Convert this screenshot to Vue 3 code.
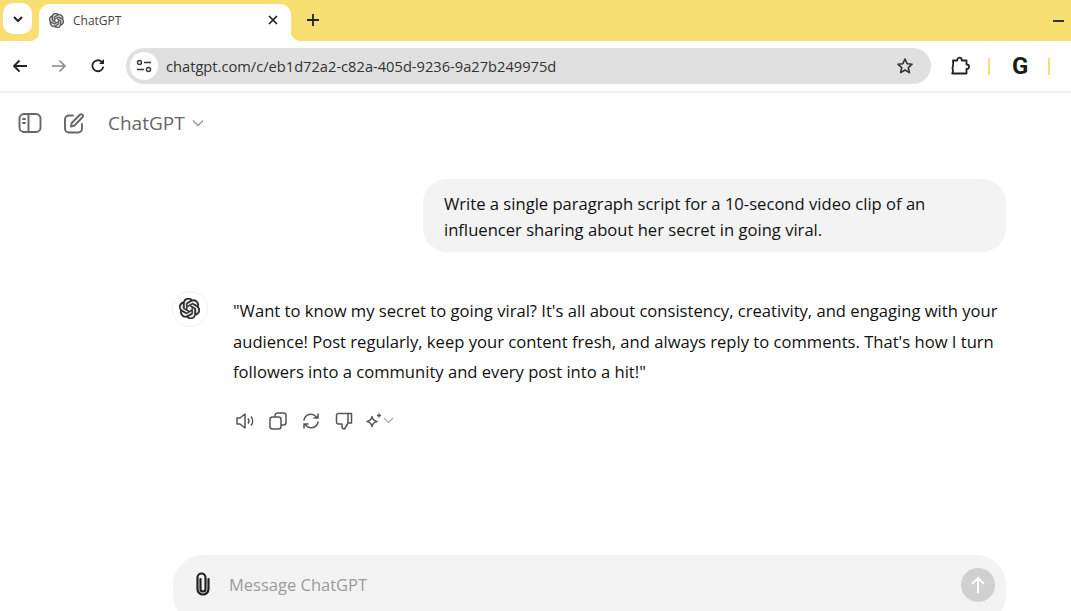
<template>
  <div class="page">
    <!-- tab strip -->
    <div class="tabstrip">
      <button class="tab-search">
        <svg width="12" height="12" viewBox="0 0 12 12"><path d="M2 4l4 4 4-4" fill="none" stroke="#222" stroke-width="2" /></svg>
      </button>
      <div class="tab">
        <svg class="favicon" width="15" height="15" viewBox="0 0 24 24"><path :d="logo" fill="#555" stroke="#555" stroke-width="1" /></svg>
        <span class="tab-title">ChatGPT</span>
        <svg class="tab-close" width="10" height="10" viewBox="0 0 10 10"><path d="M1 1l8 8M9 1l-8 8" stroke="#222" stroke-width="1.7" /></svg>
      </div>
      <svg class="new-tab" width="12" height="12" viewBox="0 0 12 12"><path d="M6 0v12M0 6h12" stroke="#222" stroke-width="1.8" /></svg>
      <span class="minimize"></span>
    </div>

    <!-- toolbar -->
    <div class="toolbar">
      <svg class="nav" width="16" height="14" viewBox="0 0 16 14"><path d="M15 7H2M7.500 1.500L2 7l5.500 5.500" fill="none" stroke="#222" stroke-width="1.8" /></svg>
      <svg class="nav" width="16" height="14" viewBox="0 0 16 14"><path d="M1 7h13M8.500 1.500L14 7l-5.500 5.500" fill="none" stroke="#888" stroke-width="1.5" /></svg>
      <svg class="nav" width="16" height="16" viewBox="0 0 16 16"><path d="M13.300 8.600A5.500 5.500 0 1 1 11.700 3.800L13.500 5.500" fill="none" stroke="#222" stroke-width="1.8" /><path d="M14 1v5H9z" fill="#222" /></svg>
      <div class="omnibox">
        <span class="site-info">
          <svg width="16" height="14" viewBox="0 0 16 14" fill="none" stroke="#333" stroke-width="1.4"><circle cx="3.500" cy="3.500" r="2" /><path d="M8 3.500h7M1 10.500h7" /><circle cx="12.500" cy="10.500" r="2" /></svg>
        </span>
        <span class="url">chatgpt.com/c/eb1d72a2-c82a-405d-9236-9a27b249975d</span>
        <svg class="star" width="18" height="18" viewBox="0 0 18 18"><path d="M9 2l2.100 4.700 5 .5-3.800 3.400 1.100 5L9 13l-4.400 2.600 1.100-5L1.900 7.200l5-.5z" fill="none" stroke="#333" stroke-width="1.600" stroke-linejoin="round" /></svg>
      </div>
      <svg class="puzzle" width="20" height="20" viewBox="0 0 20 20"><path d="M3 4.500h4.300v-.6a2.200 2.200 0 0 1 4.400 0v.6H16.500v4h.3a2.200 2.200 0 0 1 0 4.400h-.3v4.600H2.200c.9-1.500 1.200-3.200 .3-5.200.8-2.600 1-5 .5-7.800z" fill="none" stroke="#222" stroke-width="1.800" stroke-linejoin="round" /></svg>
      <span class="sep sep-a"></span>
      <span class="g-mark">G</span>
      <span class="sep sep-b"></span>
    </div>

    <!-- chatgpt page -->
    <div class="app-header">
      <svg class="head-icon" width="24" height="22" viewBox="0 0 24 22" fill="none" stroke="#666" stroke-width="1.900"><rect x="1.500" y="2" width="21" height="18" rx="4.500" /><path d="M10.500 2v18" /><path d="M5 7h2M5 11h2" stroke-linecap="round" /></svg>
      <svg class="head-icon edit" width="22" height="22" viewBox="0 0 22 22" fill="none" stroke="#666" stroke-width="1.900" stroke-linecap="round" stroke-linejoin="round"><path d="M10 3.500H6a4 4 0 0 0-4 4v9a4 4 0 0 0 4 4h9a4 4 0 0 0 4-4V12" /><path d="M8 14.500l.7-3.500 8.500-8.500a1.800 1.800 0 0 1 2.500 2.500L11.500 13.500z" /></svg>
      <span class="model">ChatGPT</span>
      <svg width="12" height="8" viewBox="0 0 12 8"><path d="M1 1.500l5 5 5-5" fill="none" stroke="#999" stroke-width="1.400" /></svg>
    </div>

    <main class="chat">
      <div class="user-row">
        <div class="bubble">Write a single paragraph script for a 10-second video clip of an influencer sharing about her secret in going viral.</div>
      </div>

      <div class="answer">
        <div class="avatar">
          <svg width="21" height="21" viewBox="0 0 24 24"><path :d="logo" fill="#222" stroke="#222" stroke-width=".6" /></svg>
        </div>
        <div class="answer-body">
          <p class="answer-text">"Want to know my secret to going viral? It's all about consistency, creativity, and engaging with your audience! Post regularly, keep your content fresh, and always reply to comments. That's how I turn followers into a community and every post into a hit!"</p>
          <div class="actions">
            <svg width="22" height="20" viewBox="0 0 22 20"><path d="M4 7h3l5-4v14l-5-4H4z" fill="none" stroke="#555" stroke-width="1.500" stroke-linejoin="round" /><path d="M15 7.500a4 4 0 0 1 0 5M18 5.500a7 7 0 0 1 0 9" fill="none" stroke="#555" stroke-width="1.500" /></svg>
            <svg width="20" height="20" viewBox="0 0 20 20" fill="none" stroke="#555" stroke-width="1.500"><rect x="2" y="6" width="11" height="12" rx="2.500" /><path d="M7 6V4.500A2.500 2.500 0 0 1 9.500 2h6A2.500 2.500 0 0 1 18 4.500v7a2.500 2.500 0 0 1-2.500 2.500H13" /></svg>
            <svg width="20" height="20" viewBox="0 0 20 20" fill="none" stroke="#555" stroke-width="1.500" stroke-linecap="round"><path d="M3 9a7 7 0 0 1 12-3.500L17 7M17 3v4h-4M17 11a7 7 0 0 1-12 3.500L3 13M3 17v-4h4" /></svg>
            <svg width="20" height="20" viewBox="0 0 20 20" fill="none" stroke="#555" stroke-width="1.500" stroke-linejoin="round"><path d="M2.500 4.500A2 2 0 0 1 4.500 2.500H17.500V12H14L10.500 18c-1.500 0-2.500-1-2.500-2.500V13H4.500a2 2 0 0 1-2-2z" /><path d="M14 3v9" /></svg>
            <span class="spark">
              <svg width="18" height="18" viewBox="0 0 18 18" fill="none" stroke="#555" stroke-width="1.400" stroke-linejoin="round"><path d="M7 4.500c.6 3 1.700 4.300 5 5-3.300.7-4.400 2-5 5-.6-3-1.700-4.300-5-5 3.300-.7 4.400-2 5-5z" /><path d="M14 1.500v4M12 3.500h4" /></svg>
              <svg width="11" height="7" viewBox="0 0 11 7"><path d="M1 1l4.500 4.500L10 1" fill="none" stroke="#aaa" stroke-width="1.200" /></svg>
            </span>
          </div>
        </div>
      </div>

      <div class="composer">
        <svg class="clip" width="20" height="24" viewBox="0 0 20 24"><path d="M7.500 7v10a2.500 2.500 0 0 0 5 0V5.500a4 4 0 0 0-8 0V17a5.500 5.500 0 0 0 11 0V7" fill="none" stroke="#222" stroke-width="2.200" stroke-linecap="round" /></svg>
        <span class="placeholder">Message ChatGPT</span>
        <button class="send">
          <svg width="16" height="18" viewBox="0 0 16 18"><path d="M8 17V2M2 8l6-6 6 6" fill="none" stroke="#fff" stroke-width="2" /></svg>
        </button>
      </div>
    </main>
  </div>
</template>

<script setup>
const logo = "M22.2819 9.8211a5.9847 5.9847 0 0 0-.5157-4.9108 6.0462 6.0462 0 0 0-6.5098-2.9A6.0651 6.0651 0 0 0 4.9807 4.1818a5.9847 5.9847 0 0 0-3.9977 2.9 6.0462 6.0462 0 0 0 .7427 7.0966 5.98 5.98 0 0 0 .511 4.9107 6.051 6.051 0 0 0 6.5146 2.9001A5.9847 5.9847 0 0 0 13.2599 24a6.0557 6.0557 0 0 0 5.7718-4.2058 5.9894 5.9894 0 0 0 3.9977-2.9001 6.0557 6.0557 0 0 0-.7475-7.0729zm-9.022 12.6081a4.4755 4.4755 0 0 1-2.8764-1.0408l.1419-.0804 4.7783-2.7582a.7948.7948 0 0 0 .3927-.6813v-6.7369l2.02 1.1686a.071.071 0 0 1 .038.052v5.5826a4.504 4.504 0 0 1-4.4945 4.4944zm-9.6607-4.1254a4.4708 4.4708 0 0 1-.5346-3.0137l.142.0852 4.783 2.7582a.7712.7712 0 0 0 .7806 0l5.8428-3.3685v2.3324a.0804.0804 0 0 1-.0332.0615L9.74 19.9502a4.4992 4.4992 0 0 1-6.1408-1.6464zM2.3408 7.8956a4.485 4.485 0 0 1 2.3655-1.9728V11.6a.7664.7664 0 0 0 .3879.6765l5.8144 3.3543-2.0201 1.1685a.0757.0757 0 0 1-.071 0l-4.8303-2.7865A4.504 4.504 0 0 1 2.3408 7.872zm16.5963 3.8558L13.1038 8.364 15.1192 7.2a.0757.0757 0 0 1 .071 0l4.8303 2.7913a4.4944 4.4944 0 0 1-.6765 8.1042v-5.6772a.79.79 0 0 0-.407-.667zm2.0107-3.0231l-.142-.0852-4.7735-2.7818a.7759.7759 0 0 0-.7854 0L9.409 9.2297V6.8974a.0662.0662 0 0 1 .0284-.0615l4.8303-2.7866a4.4992 4.4992 0 0 1 6.6802 4.66zM8.3065 12.863l-2.02-1.1638a.0804.0804 0 0 1-.038-.0567V6.0742a4.4992 4.4992 0 0 1 7.3757-3.4537l-.142.0805L8.704 5.459a.7948.7948 0 0 0-.3927.6813zm1.0976-2.3654l2.602-1.4998 2.6069 1.4998v2.9994l-2.5974 1.4997-2.6067-1.4997Z";
</script>

<style>
html, body { margin: 0; background: #fff; overflow: hidden; }
</style>

<style scoped>
.page {
  width: 1071px;
  height: 611px;
  overflow: hidden;
  display: flex;
  flex-direction: column;
  font-family: "Open Sans", "Noto Sans", sans-serif;
  color: #111;
  background: #fff;
}

/* 分頁列 */
.tabstrip {
  height: 41px;
  flex: none;
  display: flex;
  align-items: flex-end;
  background: #f8df72;
  padding: 0 7px 0 3px;
}
.tab-search {
  width: 29px;
  height: 31px;
  align-self: flex-start;
  margin-top: 3px;
  border: none;
  padding: 0;
  border-radius: 10px;
  background: #fff;
  display: flex;
  align-items: center;
  justify-content: center;
}
.tab {
  position: relative;
  width: 252px;
  height: 37px;
  margin-left: 7px;
  box-sizing: border-box;
  padding: 0 13px 5px 10px;
  background: #fff;
  border-radius: 11px 11px 0 0;
  display: flex;
  align-items: center;
}
.tab::before, .tab::after {
  content: "";
  position: absolute;
  bottom: 0;
  width: 10px;
  height: 10px;
}
.tab::before { left: -10px; background: radial-gradient(circle at 0 0, transparent 10px, #fff 10.5px); }
.tab::after { right: -10px; background: radial-gradient(circle at 100% 0, transparent 10px, #fff 10.5px); }
.tab-title {
  margin-left: 9px;
  font-size: 12px;
  color: #444;
  flex: 1;
}
.new-tab { align-self: center; margin-left: 16px; margin-bottom: 1px; }
.minimize {
  align-self: center;
  margin-left: auto;
  width: 11px;
  height: 2px;
  background: #333;
}

/* 工具列 */
.toolbar {
  height: 50px;
  flex: none;
  display: flex;
  align-items: center;
  box-sizing: border-box;
  padding-left: 12px;
  background: #fff;
}
.nav { margin-right: 23px; }
.nav:nth-child(3) { margin-right: 20px; }
.omnibox {
  width: 805px;
  height: 36px;
  box-sizing: border-box;
  padding: 0 17px 0 4px;
  border-radius: 18px;
  background: #e0e0e0;
  display: flex;
  align-items: center;
}
.site-info {
  width: 28px;
  height: 28px;
  border-radius: 50%;
  background: #fff;
  display: flex;
  align-items: center;
  justify-content: center;
}
.url {
  margin-left: 8px;
  font-size: 14.660px;
  color: #333;
  flex: 1;
}
.puzzle { margin-left: 19px; }
.sep {
  width: 2px;
  height: 17px;
  background: #f8df72;
}
.sep-a { margin-left: 18px; }
.g-mark {
  margin-left: 22px;
  font-family: "Roboto", sans-serif;
  font-size: 24px;
  font-weight: 700;
  color: #1b1b1b;
}
.sep-b { margin-left: 20px; }

.app-header {
  height: 60px;
  flex: none;
  box-sizing: border-box;
  border-top: 2px solid #eee;
  padding: 1px 0 0 18px;
  display: flex;
  align-items: center;
}
.edit { margin-left: 21px; }
.model {
  margin-left: 23px;
  margin-right: 7px;
  font-size: 19px;
  font-weight: 500;
  color: #666;
}

/* 對話區 */
.chat {
  flex: 1;
  position: relative;
  display: flex;
  flex-direction: column;
  padding: 28px 65px 0 172px;
}
.user-row { display: flex; justify-content: flex-end; }
.bubble {
  width: 583px;
  height: 73px;
  box-sizing: border-box;
  padding: 12px 60px 0 21px;
  border-radius: 24px;
  background: #f3f3f3;
  font-size: 16.600px;
  line-height: 26px;
  color: #111;
}
.answer {
  display: flex;
  margin-top: 39px;
}
.avatar {
  width: 36px;
  height: 36px;
  flex: none;
  border: 1px solid #f1f1f1;
  box-sizing: border-box;
  border-radius: 50%;
  padding: 0 2px 2px 0;
  display: flex;
  align-items: center;
  justify-content: center;
}
.answer-body { margin-left: 25px; }
.answer-text {
  margin: 5px 0 0;
  font-size: 16.600px;
  line-height: 30.500px;
  color: #111;
}
.actions {
  margin-top: 23px;
  display: flex;
  align-items: center;
  gap: 13px;
}
.spark { display: flex; align-items: center; gap: 0; margin-left: -2px; }

.composer {
  position: absolute;
  left: 173px;
  top: 404px;
  width: 833px;
  height: 70px;
  box-sizing: border-box;
  padding: 13px 11px 0 20px;
  border-radius: 30px;
  background: #f3f3f3;
  display: flex;
  align-items: flex-start;
}
.clip { margin-top: 4px; }
.placeholder {
  margin-left: 16px;
  margin-top: 5px;
  font-size: 16.500px;
  color: #9b9b9b;
  flex: 1;
}
.send {
  width: 34px;
  height: 34px;
  border: none;
  padding: 0;
  border-radius: 50%;
  background: #d0d0d0;
  display: flex;
  align-items: center;
  justify-content: center;
}
</style>
